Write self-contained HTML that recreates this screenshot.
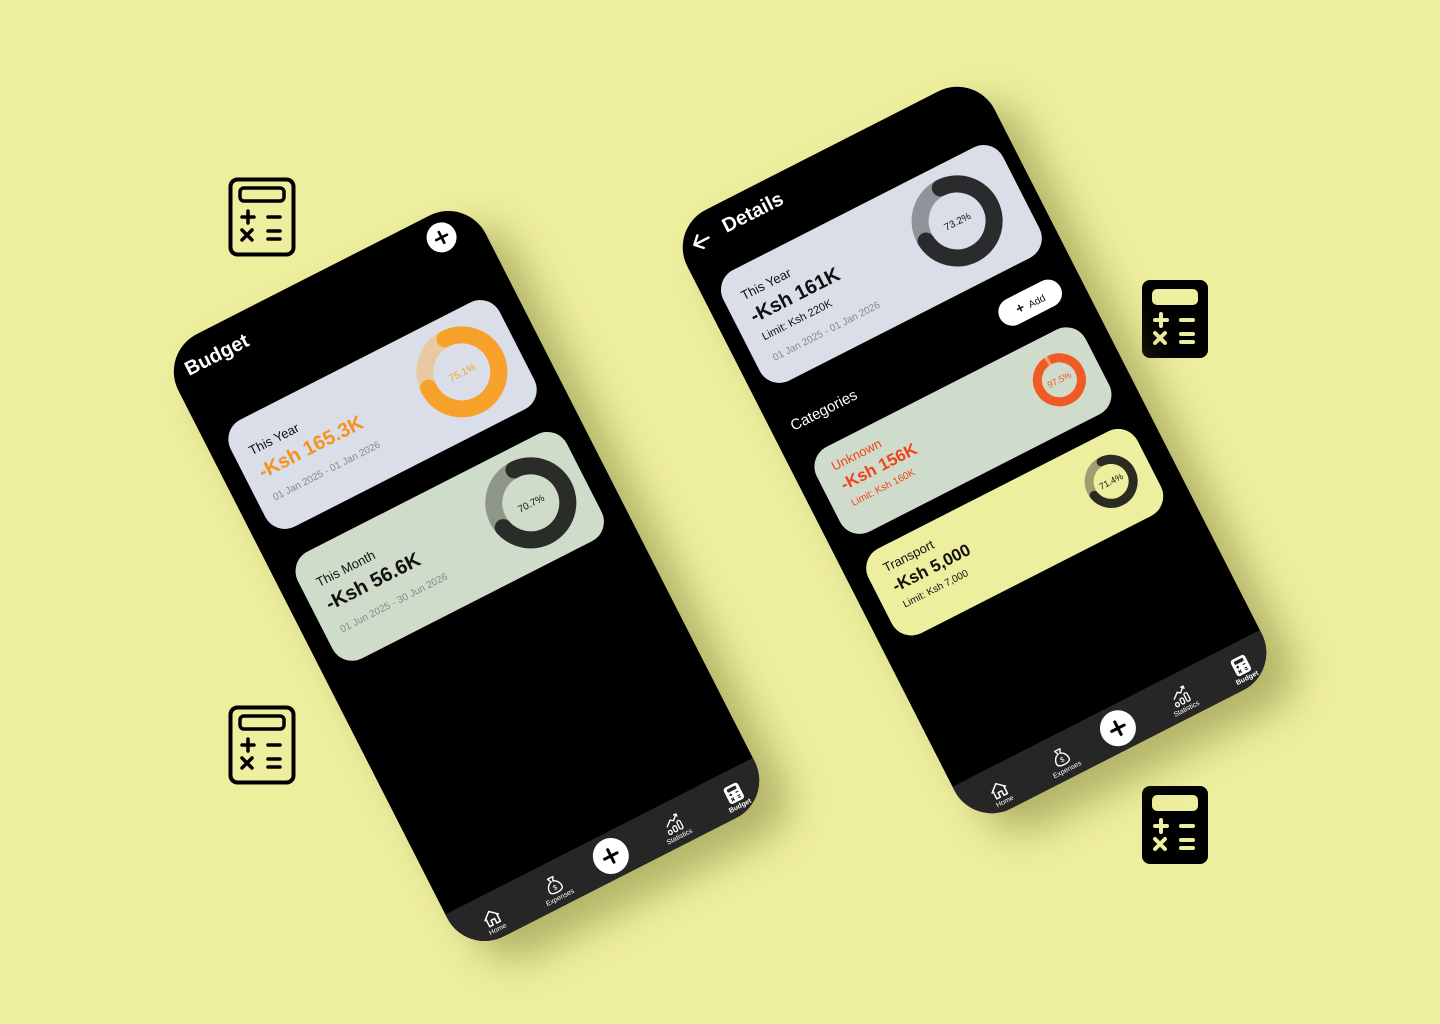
<!DOCTYPE html>
<html><head><meta charset="utf-8"><style>
*{margin:0;padding:0;box-sizing:border-box}
body{width:1440px;height:1024px;background:#eeee9f;position:relative;overflow:hidden;font-family:"Liberation Sans",sans-serif}
.phone{position:absolute;background:#000;border-radius:42px;transform:rotate(-27deg);box-shadow:18px 30px 38px rgba(110,110,40,.45);overflow:hidden}
.abs{position:absolute}
.card{position:absolute;border-radius:22px}
.t{position:absolute;white-space:nowrap}
.nav{position:absolute;left:0;bottom:0;width:100%;height:46px;background:#262626}
.ni{position:absolute;bottom:5px;width:50px;margin-left:-25px;text-align:center;color:#fff;font-size:7px}
.ni svg{display:block;margin:0 auto 1px}
.plus{position:absolute;width:36px;height:36px;border-radius:50%;background:#fff;margin-left:-18px}
</style></head><body>

<svg class="abs" style="left:228px;top:177px" width="68" height="80" viewBox="0 0 68 80"><rect x="2.5" y="2.5" width="63" height="75" rx="7" fill="none" stroke="#000" stroke-width="4"/><rect x="12" y="11" width="44" height="13" rx="4" fill="none" stroke="#000" stroke-width="3.5"/><path d="M14 40h12M20 34v12M40 40h12M14 53l10 10M24 53l-10 10M40 54h12M40 62h12" stroke="#000" stroke-width="3.5" stroke-linecap="round"/></svg>
<svg class="abs" style="left:228px;top:705px" width="68" height="80" viewBox="0 0 68 80"><rect x="2.5" y="2.5" width="63" height="75" rx="7" fill="none" stroke="#000" stroke-width="4"/><rect x="12" y="11" width="44" height="13" rx="4" fill="none" stroke="#000" stroke-width="3.5"/><path d="M14 40h12M20 34v12M40 40h12M14 53l10 10M24 53l-10 10M40 54h12M40 62h12" stroke="#000" stroke-width="3.5" stroke-linecap="round"/></svg>
<svg class="abs" style="left:1141px;top:279px" width="68" height="80" viewBox="0 0 68 80"><rect x="1" y="1" width="66" height="78" rx="8" fill="#000"/><rect x="11" y="10" width="46" height="16" rx="5" fill="#eeee9f"/><path d="M14 41h12M20 35v12M40 41h12M14 54l10 10M24 54l-10 10M40 55h12M40 63h12" stroke="#eeee9f" stroke-width="4" stroke-linecap="round"/></svg>
<svg class="abs" style="left:1141px;top:785px" width="68" height="80" viewBox="0 0 68 80"><rect x="1" y="1" width="66" height="78" rx="8" fill="#000"/><rect x="11" y="10" width="46" height="16" rx="5" fill="#eeee9f"/><path d="M14 41h12M20 35v12M40 41h12M14 54l10 10M24 54l-10 10M40 55h12M40 63h12" stroke="#eeee9f" stroke-width="4" stroke-linecap="round"/></svg>

<!-- LEFT PHONE -->
<div class="phone" style="left:294px;top:238px;width:345px;height:676px">
  <div class="t" style="left:16px;top:17px;color:#fff;font-size:20px;font-weight:bold">Budget</div>
  <div class="abs" style="left:289px;top:10px;width:30px;height:30px;border-radius:50%;background:#fff"><svg width="30" height="30"><path d="M9 15h12M15 9v12" stroke="#000" stroke-width="2.6" stroke-linecap="round"/></svg></div>

  <div class="card" style="left:20px;top:96px;width:302px;height:120px;background:#d9dee8">
    <div class="t" style="left:16px;top:25px;font-size:13px;color:#111">This Year</div>
    <div class="t" style="left:15px;top:46px;font-size:20px;font-weight:bold;color:#f7921e">-Ksh 165.3K</div>
    <div class="t" style="left:16px;top:80px;font-size:10px;color:#888">01 Jan 2025 - 01 Jan 2026</div>
    <svg class="abs" style="left:195px;top:12px" width="92" height="92" viewBox="0 0 92 92"><circle cx="46" cy="46" r="37" fill="none" stroke="#e8c9a2" stroke-width="17"/><circle cx="46" cy="46" r="37" fill="none" stroke="#f7a02a" stroke-width="17" stroke-dasharray="174.6 232.5" stroke-linecap="round" transform="rotate(-90 46 46)"/><text x="46" y="50" text-anchor="middle" font-size="10" fill="#f7a02a" font-family="Liberation Sans">75.1%</text></svg>
  </div>

  <div class="card" style="left:20px;top:244px;width:302px;height:120px;background:#cfdcca">
    <div class="t" style="left:16px;top:25px;font-size:13px;color:#111">This Month</div>
    <div class="t" style="left:15px;top:46px;font-size:20px;font-weight:bold;color:#111">-Ksh 56.6K</div>
    <div class="t" style="left:16px;top:80px;font-size:10px;color:#888">01 Jun 2025 - 30 Jun 2026</div>
    <svg class="abs" style="left:197px;top:12px" width="92" height="92" viewBox="0 0 92 92"><circle cx="46" cy="46" r="37" fill="none" stroke="#8e958b" stroke-width="17"/><circle cx="46" cy="46" r="37" fill="none" stroke="#2a2c28" stroke-width="17" stroke-dasharray="164.4 232.5" stroke-linecap="round" transform="rotate(-90 46 46)"/><text x="46" y="50" text-anchor="middle" font-size="10" fill="#111" font-family="Liberation Sans">70.7%</text></svg>
  </div>

  <div class="nav">
    <div class="ni" style="left:40px"><svg width="20" height="18" viewBox="0 0 20 18"><path d="M2 9L10 2l8 7M4 7.5V16h4v-5h4v5h4V7.5" fill="none" stroke="#fff" stroke-width="1.5" stroke-linejoin="round"/></svg>Home</div>
    <div class="ni" style="left:110px"><svg width="18" height="20" viewBox="0 0 18 20"><path d="M6 2h6l-2 4c4 1 6 5 6 8 0 3-3 4-7 4s-7-1-7-4c0-3 2-7 6-8z" fill="none" stroke="#fff" stroke-width="1.4" stroke-linejoin="round"/><text x="9" y="15" text-anchor="middle" font-size="7" fill="#fff" font-family="Liberation Sans">$</text></svg>Expenses</div>
    <div class="plus" style="left:174px;bottom:5px"><svg width="36" height="36"><path d="M11 18h14M18 11v14" stroke="#000" stroke-width="3" stroke-linecap="round"/></svg></div>
    <div class="ni" style="left:244px"><svg width="20" height="20" viewBox="0 0 20 20"><path d="M3 10l6-5 3 2 5-5M14 2h3v3" fill="none" stroke="#fff" stroke-width="1.4"/><rect x="2" y="14" width="3.5" height="4" rx="1.5" fill="none" stroke="#fff" stroke-width="1.3"/><rect x="8" y="12" width="3.5" height="6" rx="1.5" fill="none" stroke="#fff" stroke-width="1.3"/><rect x="14" y="9" width="3.5" height="9" rx="1.5" fill="none" stroke="#fff" stroke-width="1.3"/></svg>Statistics</div>
    <div class="ni" style="left:312px;font-weight:bold"><svg width="18" height="20" viewBox="0 0 18 20"><rect x="1" y="1" width="16" height="18" rx="3" fill="#fff"/><rect x="4" y="3.5" width="10" height="3.5" rx="1" fill="#262626"/><path d="M4 10h3M5.5 8.5v3M11 10h3M4 13.5l3 3M7 13.5l-3 3M11 14h3M11 16h3" stroke="#262626" stroke-width="1.2"/></svg>Budget</div>
  </div>
</div>

<!-- RIGHT PHONE -->
<div class="phone" style="left:802px;top:114px;width:345px;height:672px">
  <svg class="abs" style="left:13px;top:15px" width="22" height="22"><path d="M19 11H4M10 4l-7 7 7 7" fill="none" stroke="#fff" stroke-width="2.4" stroke-linecap="round" stroke-linejoin="round"/></svg>
  <div class="t" style="left:50px;top:13px;color:#fff;font-size:20px;font-weight:bold">Details</div>

  <div class="card" style="left:17px;top:66px;width:314px;height:124px;background:#d9dee8">
    <div class="t" style="left:18px;top:20px;font-size:13px;color:#111">This Year</div>
    <div class="t" style="left:17px;top:40px;font-size:20px;font-weight:bold;color:#111">-Ksh 161K</div>
    <div class="t" style="left:18px;top:68px;font-size:11px;color:#111">Limit: Ksh 220K</div>
    <div class="t" style="left:18px;top:92px;font-size:10px;color:#888">01 Jan 2025 - 01 Jan 2026</div>
    <svg class="abs" style="left:198px;top:12px" width="92" height="92" viewBox="0 0 92 92"><circle cx="46" cy="46" r="37" fill="none" stroke="#8f949b" stroke-width="17"/><circle cx="46" cy="46" r="37" fill="none" stroke="#2a2b2d" stroke-width="17" stroke-dasharray="170.2 232.5" stroke-linecap="round" transform="rotate(-90 46 46)"/><text x="46" y="50" text-anchor="middle" font-size="10" fill="#111" font-family="Liberation Sans">73.2%</text></svg>
  </div>

  <div class="abs" style="left:255px;top:216px;width:68px;height:28px;border-radius:14px;background:#fff;font-size:10px;color:#111;line-height:28px;text-align:center"><b style="font-size:14px">+</b>&nbsp; Add</div>
  <div class="t" style="left:20px;top:224px;color:#fff;font-size:15px">Categories</div>

  <div class="card" style="left:20px;top:266px;width:302px;height:95px;background:#cfdccb">
    <div class="t" style="left:18px;top:13px;font-size:13px;color:#f0441c">Unknown</div>
    <div class="t" style="left:18px;top:32px;font-size:17px;font-weight:bold;color:#f0441c">-Ksh 156K</div>
    <div class="t" style="left:19px;top:57px;font-size:10px;color:#f0441c">Limit: Ksh 160K</div>
    <svg class="abs" style="left:231px;top:17px" width="58" height="58" viewBox="0 0 58 58"><circle cx="29" cy="29" r="22" fill="none" stroke="#f4a070" stroke-width="9"/><circle cx="29" cy="29" r="22" fill="none" stroke="#f05a24" stroke-width="9" stroke-dasharray="134.8 138.2" transform="rotate(-90 29 29)"/><text x="29" y="32" text-anchor="middle" font-size="9" fill="#f05a24" font-family="Liberation Sans">97.5%</text></svg>
  </div>

  <div class="card" style="left:20px;top:380px;width:302px;height:95px;background:#eeee9f">
    <div class="t" style="left:18px;top:13px;font-size:13px;color:#111">Transport</div>
    <div class="t" style="left:18px;top:32px;font-size:17px;font-weight:bold;color:#111">-Ksh 5,000</div>
    <div class="t" style="left:19px;top:57px;font-size:10px;color:#111">Limit: Ksh 7,000</div>
    <svg class="abs" style="left:231px;top:17px" width="58" height="58" viewBox="0 0 58 58"><circle cx="29" cy="29" r="22" fill="none" stroke="#9e9e70" stroke-width="9"/><circle cx="29" cy="29" r="22" fill="none" stroke="#2b2b22" stroke-width="9" stroke-dasharray="98.7 138.2" stroke-linecap="round" transform="rotate(-90 29 29)"/><text x="29" y="32" text-anchor="middle" font-size="9" fill="#111" font-family="Liberation Sans">71.4%</text></svg>
  </div>

  <div class="nav">
    <div class="ni" style="left:40px"><svg width="20" height="18" viewBox="0 0 20 18"><path d="M2 9L10 2l8 7M4 7.5V16h4v-5h4v5h4V7.5" fill="none" stroke="#fff" stroke-width="1.5" stroke-linejoin="round"/></svg>Home</div>
    <div class="ni" style="left:110px"><svg width="18" height="20" viewBox="0 0 18 20"><path d="M6 2h6l-2 4c4 1 6 5 6 8 0 3-3 4-7 4s-7-1-7-4c0-3 2-7 6-8z" fill="none" stroke="#fff" stroke-width="1.4" stroke-linejoin="round"/><text x="9" y="15" text-anchor="middle" font-size="7" fill="#fff" font-family="Liberation Sans">$</text></svg>Expenses</div>
    <div class="plus" style="left:174px;bottom:5px"><svg width="36" height="36"><path d="M11 18h14M18 11v14" stroke="#000" stroke-width="3" stroke-linecap="round"/></svg></div>
    <div class="ni" style="left:244px"><svg width="20" height="20" viewBox="0 0 20 20"><path d="M3 10l6-5 3 2 5-5M14 2h3v3" fill="none" stroke="#fff" stroke-width="1.4"/><rect x="2" y="14" width="3.5" height="4" rx="1.5" fill="none" stroke="#fff" stroke-width="1.3"/><rect x="8" y="12" width="3.5" height="6" rx="1.5" fill="none" stroke="#fff" stroke-width="1.3"/><rect x="14" y="9" width="3.5" height="9" rx="1.5" fill="none" stroke="#fff" stroke-width="1.3"/></svg>Statistics</div>
    <div class="ni" style="left:312px;font-weight:bold"><svg width="18" height="20" viewBox="0 0 18 20"><rect x="1" y="1" width="16" height="18" rx="3" fill="#fff"/><rect x="4" y="3.5" width="10" height="3.5" rx="1" fill="#262626"/><path d="M4 10h3M5.5 8.5v3M11 10h3M4 13.5l3 3M7 13.5l-3 3M11 14h3M11 16h3" stroke="#262626" stroke-width="1.2"/></svg>Budget</div>
  </div>
</div>

</body></html>
